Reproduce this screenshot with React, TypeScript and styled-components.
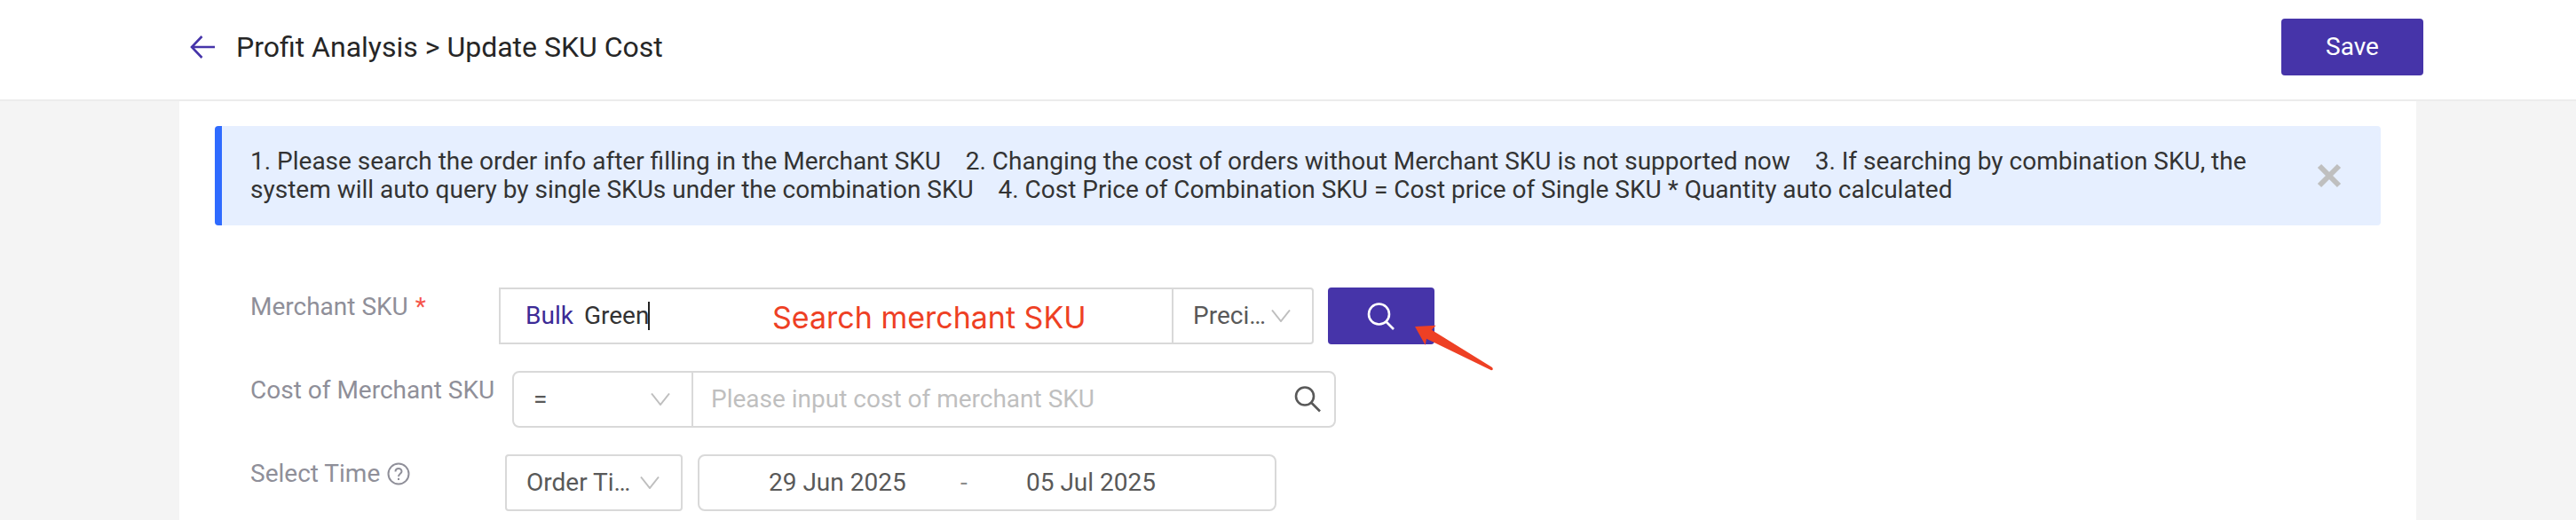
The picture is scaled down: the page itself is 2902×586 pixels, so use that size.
import React from "react";
import styled, { createGlobalStyle } from "styled-components";

const GlobalStyle = createGlobalStyle`
  * { box-sizing: border-box; }
  body {
    margin: 0;
    background: #f4f4f4;
    font-family: Roboto, "Liberation Sans", sans-serif;
    font-size: 28px;
    line-height: 32px;
    color: #333333;
  }
  button, input, select { font: inherit; }
`;

const Header = styled.header`
  display: flex;
  align-items: center;
  justify-content: space-between;
  height: 114px;
  padding: 0 172px 6px 212px;
  background: #ffffff;
  border-bottom: 2px solid #ececec;
`;

const Crumbs = styled.div`
  display: flex;
  align-items: center;
  gap: 22px;
`;

const BackLink = styled.a`
  display: flex;
  color: #4634a9;
`;

const Title = styled.h1`
  margin: 0;
  font-size: 32px;
  line-height: 40px;
  font-weight: 400;
  color: #262626;
`;

const PrimaryButton = styled.button<{ $width: number }>`
  display: flex;
  align-items: center;
  justify-content: center;
  width: ${(p) => p.$width}px;
  height: 64px;
  padding: 0;
  border: 0;
  border-radius: 4px;
  background: #4634a9;
  color: #ffffff;
`;

const Panel = styled.main`
  margin: 0 180px 0 202px;
  padding: 28px 40px 10px;
  background: #ffffff;
`;

const Notice = styled.section`
  display: flex;
  align-items: center;
  justify-content: space-between;
  gap: 60px;
  padding: 24px 42px 24px 32px;
  border-left: 8px solid #2f6bff;
  border-radius: 4px;
  background: #e6efff;
`;

const NoticeText = styled.p`
  flex: 1;
  margin: 0;
`;

const IconButton = styled.button`
  display: flex;
  padding: 0;
  border: 0;
  background: none;
  color: #595959;
`;

const Form = styled.form`
  display: flex;
  flex-direction: column;
  gap: 30px;
  padding: 70px 40px 0;
`;

const Row = styled.div`
  display: flex;
  align-items: flex-start;
  height: 64px;
`;

const Label = styled.label<{ $width: number }>`
  display: flex;
  align-items: center;
  gap: 8px;
  width: ${(p) => p.$width}px;
  padding-top: 6px;
  white-space: nowrap;
  color: #8f8f99;
`;

const Required = styled.span`
  color: #f5554a;
`;

const Field = styled.div<{ $width: number; $radius: number }>`
  display: flex;
  align-items: center;
  position: relative;
  width: ${(p) => p.$width}px;
  height: 64px;
  border: 2px solid #d9d9d9;
  border-radius: ${(p) => p.$radius}px;
`;

const MerchantField = styled(Field)`
  border-radius: 0 4px 4px 0;
`;

const Keyword = styled.div`
  display: flex;
  flex: 1;
  align-items: center;
  padding-left: 28px;
`;

const DateRange = styled(Keyword)`
  padding-left: 78px;
`;

const Tag = styled.span`
  margin-right: 12px;
  color: #3c2a96;
`;

const TextInput = styled.input<{ $width?: number }>`
  width: ${(p) => (p.$width ? `${p.$width}px` : "auto")};
  flex: ${(p) => (p.$width ? "none" : "1")};
  min-width: 0;
  padding: 0;
  border: 0;
  outline: 0;
  background: none;
  color: #333333;
  &::placeholder { color: #bfbfbf; opacity: 1; }
`;

const CostInput = styled(TextInput)`
  padding-left: 20px;
`;

const DateInput = styled(TextInput)`
  color: #595959;
`;

const Caret = styled.span`
  width: 2px;
  height: 32px;
  background: #222222;
`;

const SelectBox = styled.div<{ $width: number; $divider?: "left" | "right" }>`
  display: flex;
  align-items: center;
  justify-content: space-between;
  width: ${(p) => p.$width}px;
  height: 60px;
  padding: 0 24px 0 22px;
  ${(p) => p.$divider && `border-${p.$divider}: 2px solid #d9d9d9;`}
`;

const Select = styled.select<{ $width: number }>`
  appearance: none;
  width: ${(p) => p.$width}px;
  padding: 0;
  border: 0;
  outline: 0;
  background: none;
  color: #595959;
  overflow: hidden;
  text-overflow: ellipsis;
  white-space: nowrap;
`;

const Hint = styled.span`
  position: absolute;
  left: 306px;
  top: 10px;
  font-family: Inter, sans-serif;
  font-size: 34px;
  line-height: 44px;
  white-space: nowrap;
  color: #ee4024;
`;

const SearchWrap = styled.div`
  position: relative;
  margin-left: 16px;
`;

const Pointer = styled.svg`
  position: absolute;
  left: 96px;
  top: 40px;
  pointer-events: none;
`;

const Gap = styled.span`
  width: 17px;
`;

const Dash = styled.span`
  width: 74px;
  color: #8c8c8c;
`;

const Chevron = () => (
  <svg width="22" height="14" viewBox="0 0 22 14" fill="none" stroke="#bfbfbf" strokeWidth="2">
    <path d="M1 0.5L11 13L21 0.5" />
  </svg>
);

const notices = [
  "1. Please search the order info after filling in the Merchant SKU",
  "2. Changing the cost of orders without Merchant SKU is not supported now",
  "3. If searching by combination SKU, the system will auto query by single SKUs under the combination SKU",
  "4. Cost Price of Combination SKU = Cost price of Single SKU * Quantity auto calculated",
];

export default function App() {
  return (
    <>
      <GlobalStyle />
      <Header>
        <Crumbs>
          <BackLink href="#" aria-label="Back">
            <svg width="32" height="28" viewBox="0 0 32 28" fill="none" stroke="currentColor" strokeWidth="2.6">
              <path d="M15.5 2L4 14L15.5 26M4 14H30" />
            </svg>
          </BackLink>
          <Title>Profit Analysis &gt; Update SKU Cost</Title>
        </Crumbs>
        <PrimaryButton type="button" $width={160}>Save</PrimaryButton>
      </Header>
      <Panel>
        <Notice>
          <NoticeText>{notices.join("\u00a0\u00a0\u00a0 ")}</NoticeText>
          <IconButton type="button" aria-label="Close">
            <svg width="32" height="32" viewBox="0 0 32 32" fill="none" stroke="#bfbfbf" strokeWidth="6">
              <path d="M5 5L27 27M27 5L5 27" />
            </svg>
          </IconButton>
        </Notice>
        <Form>
          <Row>
            <Label htmlFor="sku" $width={280}>
              Merchant SKU <Required>*</Required>
            </Label>
            <MerchantField $width={918} $radius={0}>
              <Keyword>
                <Tag>Bulk</Tag>
                <TextInput id="sku" $width={72} defaultValue="Green" />
                <Caret />
              </Keyword>
              <SelectBox $width={158} $divider="left">
                <Select aria-label="Match mode" $width={82}>
                  <option>Precise Search</option>
                </Select>
                <Chevron />
              </SelectBox>
              <Hint>Search merchant SKU</Hint>
            </MerchantField>
            <SearchWrap>
              <PrimaryButton type="button" aria-label="Search" $width={120}>
                <svg width="32" height="32" viewBox="0 0 32 32" fill="none" stroke="#ffffff" strokeWidth="2.6">
                  <circle cx="13.5" cy="14" r="11.5" />
                  <path d="M21.5 22.5L30 31" />
                </svg>
              </PrimaryButton>
              <Pointer width="94" height="56" viewBox="0 0 94 56" fill="#ee4024">
                <path d="M2 4L25.700 2.700L20.700 7.700L89 50Q91 53 88 53.300L15 17.700L13.700 25Z" />
              </Pointer>
            </SearchWrap>
          </Row>
          <Row>
            <Label htmlFor="cost" $width={295}>Cost of Merchant SKU</Label>
            <Field $width={928} $radius={8}>
              <SelectBox $width={202} $divider="right">
                <Select aria-label="Comparison" $width={100}>
                  <option>=</option>
                </Select>
                <Chevron />
              </SelectBox>
              <CostInput id="cost" placeholder="Please input cost of merchant SKU" />
              <IconButton type="button" aria-label="Search cost">
                <svg width="48" height="32" viewBox="0 0 48 32" fill="none" stroke="currentColor" strokeWidth="2.6">
                  <circle cx="15" cy="12.500" r="10" />
                  <path d="M22 19.500L32 29.500" />
                </svg>
              </IconButton>
            </Field>
          </Row>
          <Row>
            <Label htmlFor="time" $width={287}>
              Select Time
              <svg width="26" height="26" viewBox="0 0 26 26" fill="none" stroke="currentColor" strokeWidth="2">
                <circle cx="13" cy="13" r="11.500" />
                <path d="M9.500 10.500C9.500 5.800 16.500 5.800 16.500 10.300C16.500 12.800 13 12.800 13 16M13 17.800V20" />
              </svg>
            </Label>
            <Field $width={200} $radius={4}>
              <SelectBox $width={196}>
                <Select id="time" $width={118}>
                  <option>Order Time</option>
                </Select>
                <Chevron />
              </SelectBox>
            </Field>
            <Gap />
            <Field $width={652} $radius={8}>
              <DateRange>
                <DateInput aria-label="Start date" $width={216} defaultValue="29 Jun 2025" />
                <Dash>-</Dash>
                <DateInput aria-label="End date" $width={216} defaultValue="05 Jul 2025" />
              </DateRange>
            </Field>
          </Row>
        </Form>
      </Panel>
    </>
  );
}
